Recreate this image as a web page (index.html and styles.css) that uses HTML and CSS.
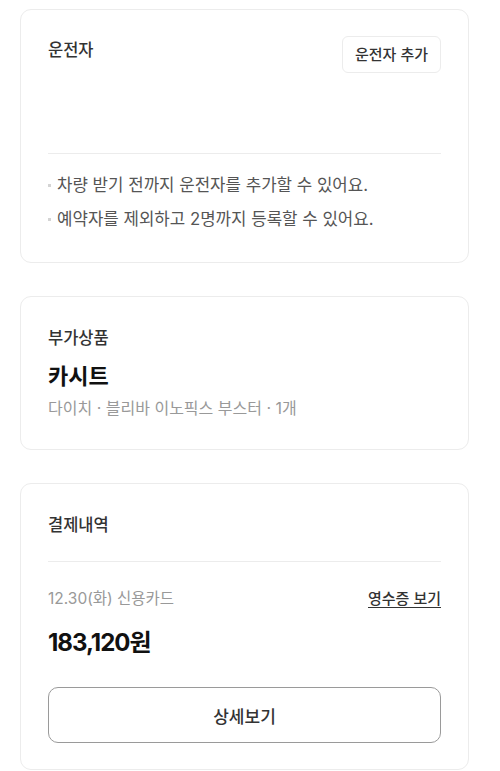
FILE: index.html
```html
<!DOCTYPE html>
<html lang="ko">
<head>
<meta charset="utf-8">
<title>예약 상세</title>
<link rel="stylesheet" href="styles.css">
</head>
<body>
<main class="page">
  <section class="card drivers">
    <div class="card-head">
      <h2 class="card-title">운전자</h2>
      <button class="btn-small" type="button">운전자 추가</button>
    </div>
    <div class="driver-list"></div>
    <ul class="notes">
      <li>차량 받기 전까지 운전자를 추가할 수 있어요.</li>
      <li>예약자를 제외하고 2명까지 등록할 수 있어요.</li>
    </ul>
  </section>

  <section class="card addons">
    <h2 class="card-title">부가상품</h2>
    <p class="addon-name">카시트</p>
    <p class="addon-desc">다이치 · 블리바 이노픽스 부스터 · 1개</p>
  </section>

  <section class="card payment">
    <h2 class="card-title pay-title">결제내역</h2>
    <div class="pay-row">
      <span class="pay-meta">12.30(화) 신용카드</span>
      <a class="receipt" href="#">영수증 보기</a>
    </div>
    <p class="pay-amount">183,120원</p>
    <button class="btn-outline" type="button">상세보기</button>
  </section>
</main>
</body>
</html>
```

FILE: styles.css
```css
* {
  box-sizing: border-box;
}

html, body {
  margin: 0;
  padding: 0;
  background: #ffffff;
}

body {
  font-family: Inter, "Noto Sans CJK KR", sans-serif;
  color: #333333;
  -webkit-font-smoothing: antialiased;
}

.page {
  width: 449px;
  margin-left: 20px;
  padding-top: 9px;
  display: flex;
  flex-direction: column;
  gap: 33px;
}

.card {
  border: 1px solid #ececec;
  border-radius: 11px;
  background: #fff;
  padding: 26px 27px 26px 27px;
}

.card-title {
  margin: 0;
  font-size: 16.5px;
  line-height: 28px;
  font-weight: 500;
  color: #333;
}

/* drivers */
.card-head {
  display: flex;
  justify-content: space-between;
  align-items: flex-start;
}

.btn-small {
  font-family: inherit;
  font-size: 15px;
  font-weight: 500;
  color: #333;
  background: #fff;
  border: 1px solid #ececec;
  border-radius: 6px;
  height: 37px;
  padding: 0 12px;
  line-height: 35px;
}

.driver-list {
  min-height: 81px;
  border-bottom: 1px solid #ececec;
}

.notes {
  list-style: none;
  margin: 14px 0 0 0;
  padding: 0;
}

.notes li {
  position: relative;
  padding-left: 9px;
  font-size: 16.8px;
  line-height: 34px;
  color: #555;
}

.notes li::before {
  content: "";
  position: absolute;
  left: 0;
  top: 16px;
  width: 3px;
  height: 3px;
  background: #d4d4d4;
}

/* add-ons */
.addons {
  padding-top: 28px;
  padding-bottom: 30px;
}

.addons .card-title {
  line-height: 26px;
}

.addon-name {
  margin: 10px 0 0 0;
  font-size: 22px;
  line-height: 30px;
  font-weight: 700;
  color: #111;
}

.addon-desc {
  margin: 6px 0 0 0;
  font-size: 16px;
  line-height: 22px;
  color: #999;
}

/* payment */
.payment {
  padding-top: 28px;
  padding-bottom: 26px;
}

.pay-title {
  line-height: 26px;
  padding-bottom: 23px;
  border-bottom: 1px solid #ececec;
}

.pay-row {
  margin-top: 25px;
  display: flex;
  justify-content: space-between;
  align-items: center;
  line-height: 24px;
}

.pay-meta {
  font-size: 15.5px;
  color: #999;
}

.receipt {
  font-size: 15px;
  font-weight: 500;
  color: #333;
  text-decoration: underline;
  text-underline-offset: 3px;
}

.pay-amount {
  margin: 15px 0 0 0;
  font-size: 24px;
  line-height: 34px;
  font-weight: 700;
  letter-spacing: -1px;
  color: #111;
}

.btn-outline {
  display: block;
  width: 100%;
  margin-top: 27px;
  height: 56px;
  border: 1px solid #9a9a9a;
  border-radius: 10px;
  background: #fff;
  font-family: inherit;
  font-size: 17px;
  font-weight: 500;
  color: #333;
}
```
